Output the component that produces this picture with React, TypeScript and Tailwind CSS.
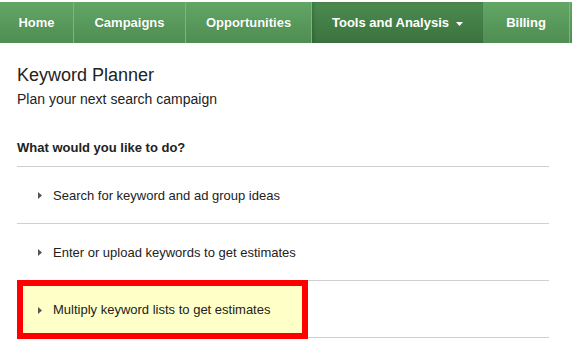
import React from "react";

const Caret = () => (
  <svg width="7" height="4" viewBox="0 0 7 4" className="ml-[7px] mt-[1px]">
    <path d="M0 0 L7 0 L3.5 4 Z" fill="#ffffff" />
  </svg>
);

const RowArrow = () => (
  <svg width="4" height="7" viewBox="0 0 4 7" className="shrink-0">
    <path d="M0 0 L4 3.5 L0 7 Z" fill="#555555" />
  </svg>
);

export default function App() {
  const nav = [
    { label: "Home", w: "w-[74px]" },
    { label: "Campaigns", w: "w-[112px]" },
    { label: "Opportunities", w: "w-[126px]" },
  ];
  return (
    <div
      className="w-[572px] h-[354px] bg-white overflow-hidden"
      style={{ fontFamily: '"Liberation Sans", Arial, sans-serif' }}
    >
      <div className="h-[2px]" />
      <nav className="flex h-[41px] bg-gradient-to-b from-[#62a665] to-[#4f8e52] text-white text-[13px] font-bold">
        {nav.map((n) => (
          <div
            key={n.label}
            className={`${n.w} flex items-center justify-center pt-[1px] border-r border-[#7cb57e] [text-shadow:0_0_1px_rgba(0,60,0,0.3)]`}
          >
            {n.label}
          </div>
        ))}
        <div className="w-[171px] flex items-center justify-center pt-[1px] bg-gradient-to-b from-[#4b8a4e] to-[#3c733f] shadow-[inset_2px_0_3px_rgba(0,0,0,0.15)]">
          <span>Tools and Analysis</span>
          <Caret />
        </div>
        <div className="w-[87px] flex items-center justify-center pt-[1px] border-r border-[#7cb57e]">
          Billing
        </div>
        <div className="flex-1" />
      </nav>

      <div className="ml-[17px] w-[532px] text-[#222222]">
        <h1 className="mt-[22px] text-[18px] leading-[20px] font-normal">Keyword Planner</h1>
        <p className="mt-[4px] text-[14px] leading-[20px]">Plan your next search campaign</p>
        <h2 className="mt-[31px] text-[13px] leading-[16px] font-bold">What would you like to do?</h2>
        <div className="mt-[10px] border-t border-[#d0d0d0]">
          <div className="h-[57px] flex items-center pt-[1px] border-b border-[#d0d0d0] pl-[21px] text-[13px] text-[#222222]">
            <RowArrow />
            <span className="ml-[11px]">Search for keyword and ad group ideas</span>
          </div>
          <div className="h-[57px] flex items-center pt-[1px] border-b border-[#d0d0d0] pl-[21px] text-[13px] text-[#222222]">
            <RowArrow />
            <span className="ml-[11px]">Enter or upload keywords to get estimates</span>
          </div>
          <div className="relative h-[57px] border-b border-[#d0d0d0] text-[13px] text-[#222222]">
            <div className="absolute -top-[1px] left-0 w-[291px] h-[59px] border-[6px] border-[#ff0000] bg-[#ffffc8] flex items-center pt-[1px] pl-[15px]">
              <RowArrow />
              <span className="ml-[11px]">Multiply keyword lists to get estimates</span>
            </div>
          </div>
        </div>
      </div>
    </div>
  );
}
